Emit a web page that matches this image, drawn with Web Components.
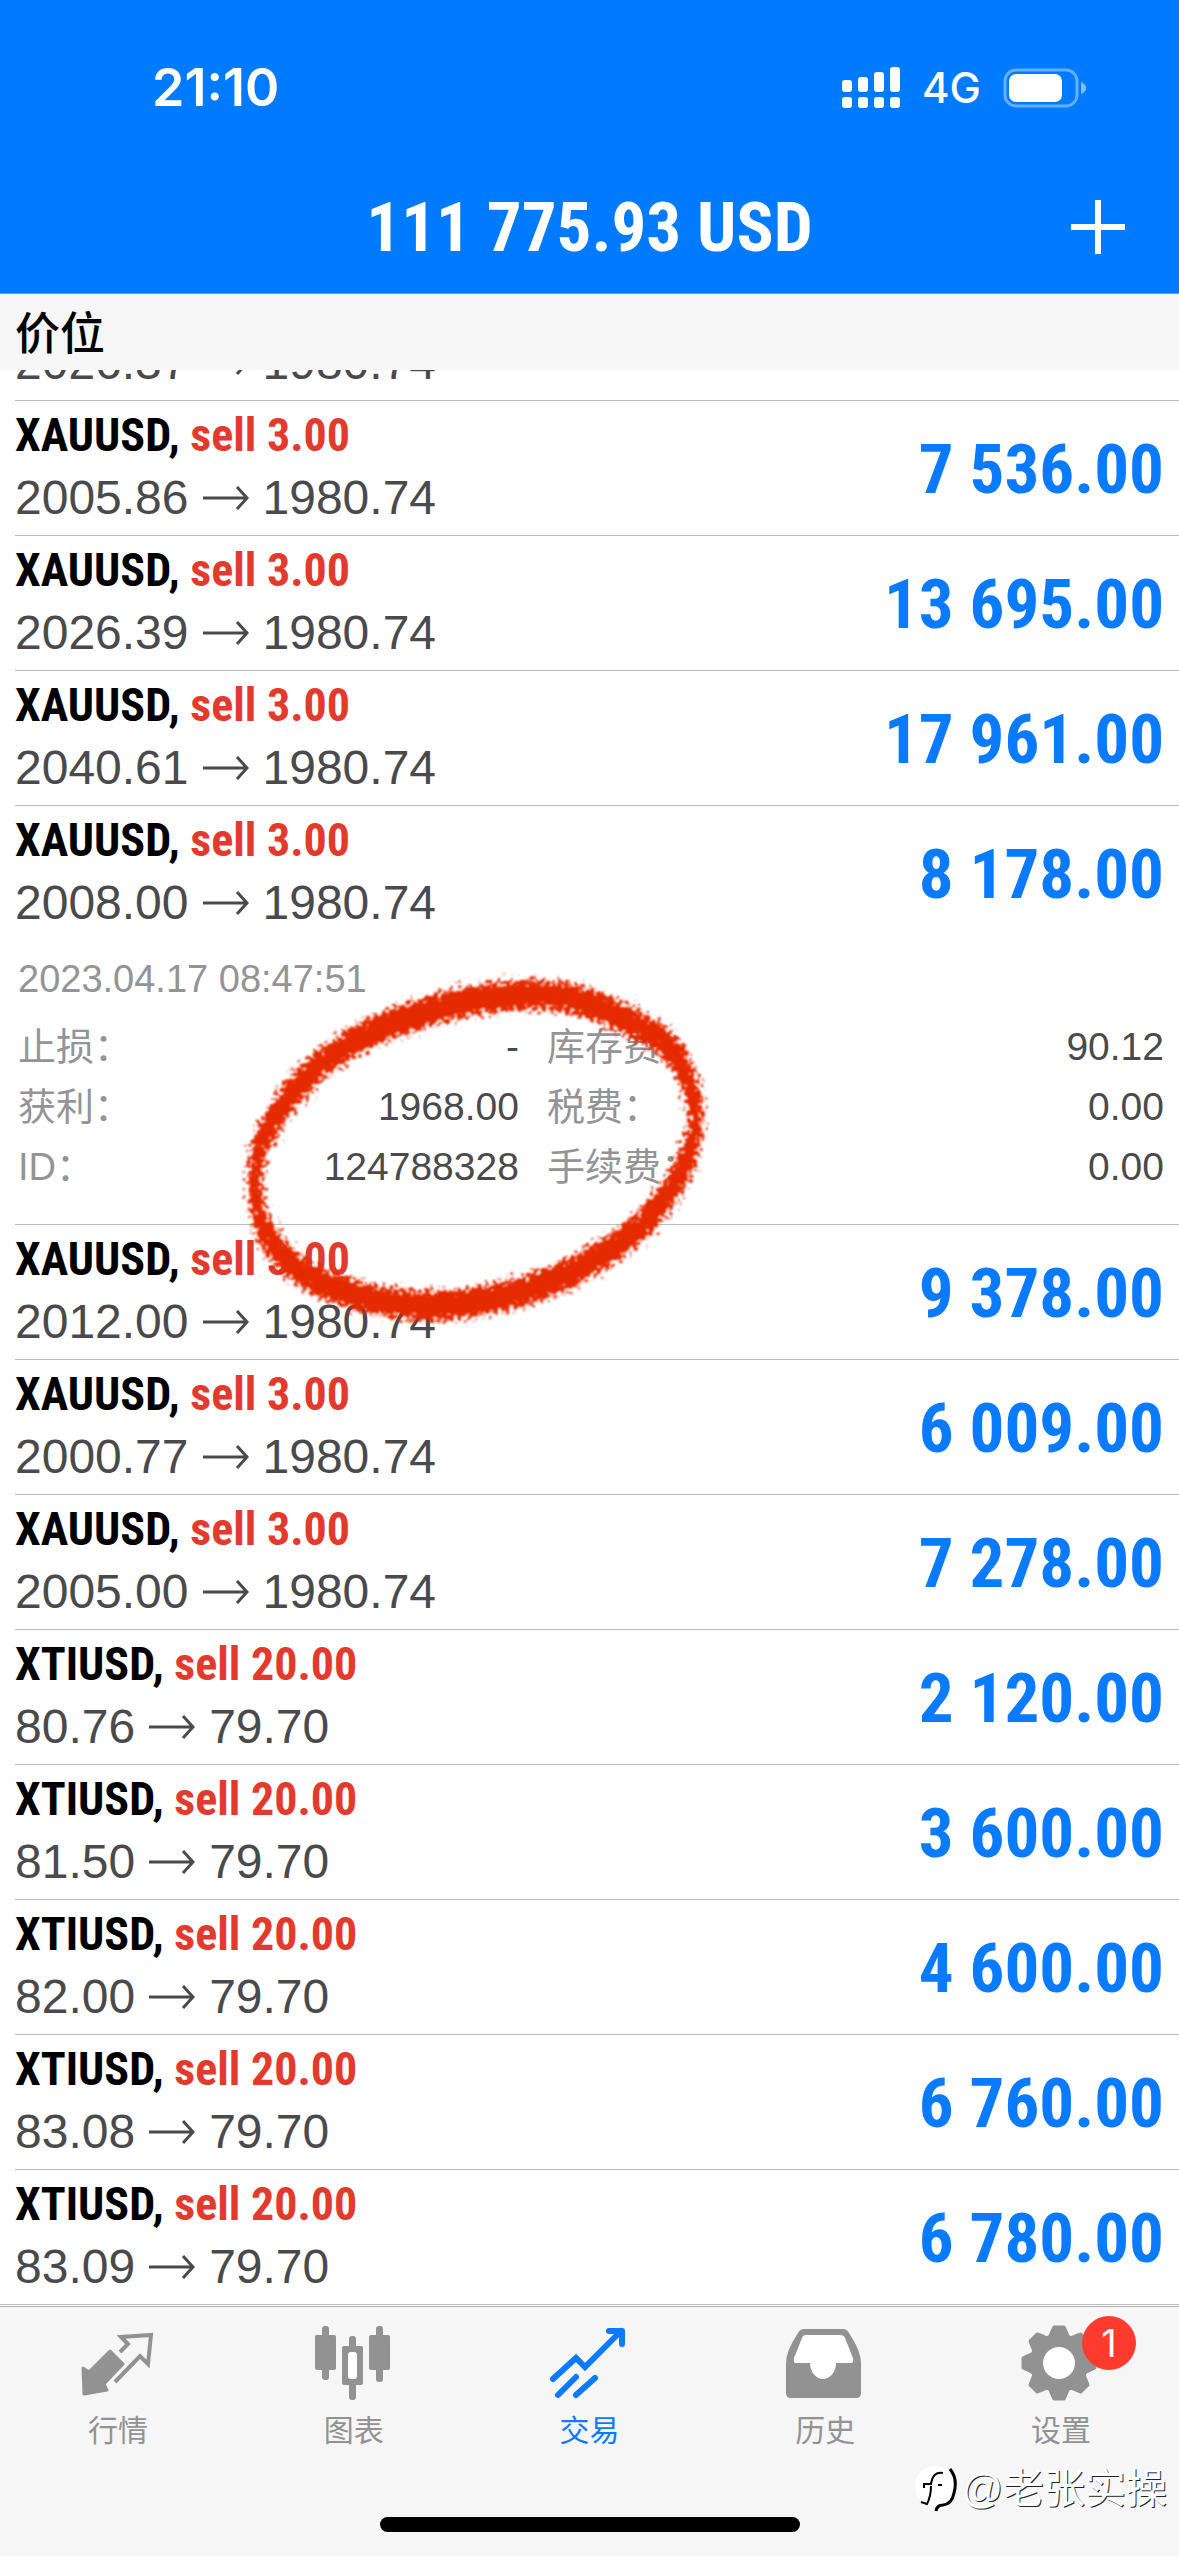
<!DOCTYPE html>
<html lang="zh-CN">
<head>
<meta charset="utf-8">
<meta name="viewport" content="width=device-width, initial-scale=1">
<title>交易</title>
<style>
  body {
    margin: 0;
    background: #fff;
    font-family: "Liberation Sans", "Noto Sans CJK SC", sans-serif;
  }
</style>
</head>
<body>
<trade-app></trade-app>

<script>
const NARROW = '"Roboto Condensed", "Liberation Sans", sans-serif';
const UI = 'Inter, "Noto Sans CJK SC", sans-serif';

function attach(el, html) {
  const template = document.createElement('template');
  template.innerHTML = html;
  el.attachShadow({ mode: 'open' }).appendChild(template.content.cloneNode(true));
}

class StatusBar extends HTMLElement {
  constructor() {
    super();
    attach(this, `
      <style>
        :host {
          display: flex;
          align-items: center;
          justify-content: space-between;
          padding: 56px 92px 20px 152px;
          color: #fff;
          font-family: ${UI};
        }
        time { font-size: 52px; line-height: 64px; font-weight: 600; }
        .right { display: flex; align-items: center; gap: 22px; }
        .network { font-size: 42px; line-height: 64px; font-weight: 500; }
        svg { display: block; }
      </style>
      <time>21:10</time>
      <div class="right">
        <svg width="58" height="42" viewBox="0 0 58 42" fill="#fff">
          <rect x="0" y="13" width="10" height="12" rx="3"/><rect x="0" y="30" width="10" height="11" rx="3"/>
          <rect x="16" y="10" width="10" height="15" rx="3"/><rect x="16" y="30" width="10" height="11" rx="3"/>
          <rect x="32" y="5" width="10" height="20" rx="3"/><rect x="32" y="30" width="10" height="11" rx="3"/>
          <rect x="48" y="0" width="10" height="25" rx="3"/><rect x="48" y="30" width="10" height="11" rx="3"/>
        </svg>
        <span class="network">4G</span>
        <svg width="84" height="40" viewBox="0 0 84 40">
          <rect x="2" y="2" width="72" height="36" rx="11" fill="none" stroke="#fff" stroke-opacity=".4" stroke-width="3"/>
          <rect x="6" y="6" width="53" height="28" rx="7" fill="#fff"/>
          <path d="M78 14q5 2 5 6t-5 6z" fill="#fff" fill-opacity=".5"/>
        </svg>
      </div>
    `);
  }
}
customElements.define('status-bar', StatusBar);

class AccountHeader extends HTMLElement {
  constructor() {
    super();
    attach(this, `
      <style>
        :host {
          display: grid;
          grid-template-columns: 1fr auto 1fr;
          align-items: center;
          padding: 38px 40px 15px;
          color: #fff;
        }
        h1 {
          grid-column: 2;
          margin: 0;
          font: 700 69px/100px ${NARROW};
          white-space: nowrap;
        }
        button {
          justify-self: end;
          padding: 12px;
          border: 0;
          background: none;
          color: inherit;
          cursor: pointer;
        }
        svg { display: block; }
      </style>
      <h1><slot></slot></h1>
      <button aria-label="新订单">
        <svg width="58" height="58" viewBox="0 0 58 58" stroke="currentColor" stroke-width="6"><path d="M29 1v54M2 28h54"/></svg>
      </button>
    `);
  }
}
customElements.define('account-header', AccountHeader);

class SectionTitle extends HTMLElement {
  constructor() {
    super();
    attach(this, `
      <style>
        :host { display: block; padding: 0 15px 2px; background: #f6f6f6; }
        h2 { margin: 0; font: 500 45px/74px "Noto Sans CJK SC", sans-serif; color: #000; }
      </style>
      <h2><slot></slot></h2>
    `);
  }
}
customElements.define('section-title', SectionTitle);

class TradePosition extends HTMLElement {
  constructor() {
    super();
    attach(this, `
      <style>
        :host {
          display: block;
          flex: none;
          margin-left: 15px;
          border-bottom: 1px solid #bcbcbe;
        }
        :host(:last-child) { margin-left: 0; padding-left: 15px; }
        /* scrolled out of view except for its price line */
        :host([partial]) .order, :host([partial]) .profit { display: none; }
        .row {
          display: flex;
          align-items: center;
          justify-content: space-between;
          padding: 3px 15px 5px 0;
        }
        .order { font: 700 46px/62px ${NARROW}; color: #000; }
        .side { color: #e23b2e; }
        .prices {
          display: flex;
          align-items: center;
          gap: 14px;
          font-size: 48px;
          line-height: 64px;
          color: #4a4a4c;
        }
        .arrow { display: block; }
        .profit {
          padding-top: 6px;
          font: 700 69px/100px ${NARROW};
          color: #0a7aff;
          white-space: nowrap;
        }
      </style>
      <div class="row">
        <div>
          <div class="order"><span class="symbol"></span>, <span class="side"></span></div>
          <div class="prices">
            <span class="open"></span>
            <svg class="arrow" width="46" height="26" viewBox="0 0 46 26" fill="none" stroke="currentColor" stroke-width="3"><path d="M0 13h44M34 2l10 11-10 11"/></svg>
            <span class="current"></span>
          </div>
        </div>
        <div class="profit"></div>
      </div>
      <slot></slot>
    `);
  }

  connectedCallback() {
    for (const name of ['symbol', 'side', 'open', 'current', 'profit']) {
      this.shadowRoot.querySelector('.' + name).textContent = this.getAttribute(name);
    }
  }
}
customElements.define('trade-position', TradePosition);

class PositionDetails extends HTMLElement {
  constructor() {
    super();
    attach(this, `
      <style>
        :host {
          display: block;
          padding: 9px 15px 27px 3px;
          font-size: 38px;
          line-height: 60px;
          color: #949496;
        }
        time { display: block; margin-bottom: 8px; }
        dl {
          display: grid;
          grid-template-columns: 500fr 616fr;
          column-gap: 28px;
          margin: 0;
        }
        dl div { display: flex; justify-content: space-between; height: 60px; }
        dd { margin: 0; font-size: 39px; color: #4a4a4c; }
      </style>
      <time>2023.04.17 08:47:51</time>
      <dl>
        <div><dt>止损：</dt><dd>-</dd></div>
        <div><dt>库存费：</dt><dd>90.12</dd></div>
        <div><dt>获利：</dt><dd>1968.00</dd></div>
        <div><dt>税费：</dt><dd>0.00</dd></div>
        <div><dt>ID：</dt><dd>124788328</dd></div>
        <div><dt>手续费：</dt><dd>0.00</dd></div>
      </dl>
    `);
  }
}
customElements.define('position-details', PositionDetails);

// Crayon loop drawn around the take profit and ticket values
class CrayonLoop extends HTMLElement {
  constructor() {
    super();
    const points = [
      [528, 990], [459, 998], [413, 1012], [367, 1030], [331, 1052], [298, 1082], [280, 1107],
      [262, 1137], [255, 1167], [257, 1200], [266, 1228], [280, 1250], [308, 1273], [349, 1290],
      [395, 1300], [441, 1303], [496, 1295], [551, 1280], [601, 1253], [643, 1223], [675, 1183],
      [691, 1150], [699, 1113], [691, 1077], [673, 1043], [643, 1023], [601, 1003], [565, 992]
    ].map(([x, y]) => [x - 231, y - 956]);
    const mid = (a, b) => `${(a[0] + b[0]) / 2} ${(a[1] + b[1]) / 2}`;
    let d = 'M' + mid(points[points.length - 1], points[0]);
    points.forEach((p, i) => {
      d += `Q${p[0]} ${p[1]} ${mid(p, points[(i + 1) % points.length])}`;
    });
    d += 'Z';

    attach(this, `
      <style>
        :host { display: block; pointer-events: none; }
        svg { display: block; }
      </style>
      <svg width="500" height="380" viewBox="0 0 500 380" aria-hidden="true">
        <filter id="rough" x="-5%" y="-5%" width="110%" height="110%">
          <feTurbulence type="fractalNoise" baseFrequency=".25" numOctaves="3" seed="4" result="noise"/>
          <feDisplacementMap in="SourceGraphic" in2="noise" scale="26" xChannelSelector="R" yChannelSelector="G"/>
          <feGaussianBlur stdDeviation=".8"/>
        </filter>
        <g fill="none" stroke="#e62a06" stroke-width="13" filter="url(#rough)">
          <path d="${d}" transform="translate(0 -8)"/>
          <path d="${d}"/>
          <path d="${d}" transform="translate(0 8)"/>
        </g>
      </svg>
    `);
  }
}
customElements.define('crayon-loop', CrayonLoop);

const ICONS = {
  quotes: `
    <path d="M5 46l6 4 21-21 13 13-19 20 3 6-23 4z" fill="currentColor" stroke="currentColor" stroke-width="3" stroke-linejoin="round"/>
    <path d="M42 30l8-8-7-7 30-2-3 29-8-8-25 26" fill="none" stroke="currentColor" stroke-width="4"/>`,
  charts: `
    <g fill="currentColor">
      <rect x="8" y="4" width="7" height="54" rx="3"/><rect x="1" y="13" width="21" height="35" rx="2"/>
      <rect x="35" y="14" width="7" height="64" rx="3"/><rect x="28" y="24" width="21" height="39" rx="2"/>
      <rect x="62" y="4" width="7" height="56" rx="3"/><rect x="55" y="13" width="21" height="35" rx="2"/>
    </g>
    <rect x="34" y="30" width="9" height="27" rx="3" fill="#fff"/>`,
  trade: `
    <g fill="none" stroke="currentColor" stroke-width="6" stroke-linecap="round">
      <path d="M4 57l23-21 9 9 36-36"/><path d="M60 9h13v13" stroke-linejoin="round"/>
      <path d="M9 73l18-18M27 73l19-17"/>
    </g>`,
  history: `
    <path d="M19 7h39q4 0 6 4 12 18 12 30v30q0 5-5 5H6q-5 0-5-5V41Q1 29 13 11q2-4 6-4z" fill="currentColor"/>
    <path d="M21 13h34q4 0 5 3l8 20q1 5-2 5H51a13 16 0 0 1-26 0H11q-3 0-2-5l8-20q1-3 4-3z" fill="#fff"/>`,
  settings: `
    <g fill="currentColor" stroke="currentColor" stroke-width="3" stroke-linejoin="round" transform="translate(38 41)">
      <circle r="28"/>
      ${[0, 45, 90, 135].map(a => `<path d="M-5-36H5q2 4 4 9V27q-2 5-4 9H-5q-2-4-4-9v-54q2-5 4-9z" transform="rotate(${a})"/>`).join('')}
    </g>
    <circle cx="38" cy="41" r="16" fill="#fff"/>`
};

class TabItem extends HTMLElement {
  constructor() {
    super();
    attach(this, `
      <style>
        :host { display: block; flex: 1 1 0; color: #929292; }
        :host([active]) { color: #0a7aff; }
        button {
          display: flex;
          flex-direction: column;
          align-items: center;
          gap: 6px;
          width: 100%;
          padding: 0;
          border: 0;
          background: none;
          color: inherit;
          font: 400 30px/40px "Noto Sans CJK SC", sans-serif;
          cursor: pointer;
        }
        .icon { position: relative; }
        svg { display: block; }
        .badge {
          position: absolute;
          top: -6px;
          right: -35px;
          width: 54px;
          border-radius: 50%;
          background: #ff3b30;
          color: #fff;
          font: 400 38px/54px ${UI};
          text-align: center;
        }
        .badge:empty { display: none; }
      </style>
      <button>
        <span class="icon">
          <svg width="80" height="80" viewBox="0 0 80 80"></svg>
          <span class="badge"></span>
        </span>
        <span><slot></slot></span>
      </button>
    `);
  }

  connectedCallback() {
    this.shadowRoot.querySelector('svg').innerHTML = ICONS[this.getAttribute('icon')];
    this.shadowRoot.querySelector('.badge').textContent = this.getAttribute('badge') || '';
    if (this.hasAttribute('active')) {
      this.shadowRoot.querySelector('button').setAttribute('aria-current', 'page');
    }
  }
}
customElements.define('tab-item', TabItem);

class TabBar extends HTMLElement {
  constructor() {
    super();
    attach(this, `
      <style>
        :host {
          display: block;
          margin-top: 1px;
          border-top: 1px solid #b0b0b2;
          background: #f6f6f6;
          padding: 15px 0 24px;
        }
        nav { display: flex; }
        .home { width: 420px; height: 15px; margin: 69px auto 0; border-radius: 8px; background: #000; }
      </style>
      <nav><slot></slot></nav>
      <div class="home"></div>
    `);
  }
}
customElements.define('tab-bar', TabBar);

class AuthorMark extends HTMLElement {
  constructor() {
    super();
    attach(this, `
      <style>
        :host {
          display: flex;
          align-items: center;
          gap: 4px;
          color: #fff;
          font: 400 41px/60px "Liberation Sans", "Noto Sans CJK SC", sans-serif;
          text-shadow: 1px 1px 0 #222;
        }
        svg { display: block; }
      </style>
      <svg width="42" height="50" viewBox="0 0 42 50" fill="none">
        <circle cx="20" cy="22" r="20" fill="#fff"/>
        <path d="M35 5q8 10 4 24-2 11-11 12-6 0-7 6" stroke="#000" stroke-width="3"/>
        <path d="M28 9q-10-2-12 11H9v4M16 22q0 10-4 18l-6-2M23 21h4" stroke="#000" stroke-width="2"/>
      </svg>
      <span>@老张实操</span>
    `);
  }
}
customElements.define('author-mark', AuthorMark);

const POSITIONS = [
  ['XAUUSD', 'sell 3.00', '2026.37', '1980.74', '', 'partial'],
  ['XAUUSD', 'sell 3.00', '2005.86', '1980.74', '7 536.00'],
  ['XAUUSD', 'sell 3.00', '2026.39', '1980.74', '13 695.00'],
  ['XAUUSD', 'sell 3.00', '2040.61', '1980.74', '17 961.00'],
  ['XAUUSD', 'sell 3.00', '2008.00', '1980.74', '8 178.00', 'expanded'],
  ['XAUUSD', 'sell 3.00', '2012.00', '1980.74', '9 378.00'],
  ['XAUUSD', 'sell 3.00', '2000.77', '1980.74', '6 009.00'],
  ['XAUUSD', 'sell 3.00', '2005.00', '1980.74', '7 278.00'],
  ['XTIUSD', 'sell 20.00', '80.76', '79.70', '2 120.00'],
  ['XTIUSD', 'sell 20.00', '81.50', '79.70', '3 600.00'],
  ['XTIUSD', 'sell 20.00', '82.00', '79.70', '4 600.00'],
  ['XTIUSD', 'sell 20.00', '83.08', '79.70', '6 760.00'],
  ['XTIUSD', 'sell 20.00', '83.09', '79.70', '6 780.00']
];

class TradeApp extends HTMLElement {
  constructor() {
    super();
    const rows = POSITIONS.map(([symbol, side, open, current, profit, state = '']) => `
      <trade-position symbol="${symbol}" side="${side}" open="${open}" current="${current}" profit="${profit}" ${state}>
        ${state === 'expanded' ? '<position-details></position-details>' : ''}
      </trade-position>`).join('');

    attach(this, `
      <style>
        :host {
          display: flex;
          flex-direction: column;
          height: 100vh;
          position: relative;
          overflow: hidden;
        }
        header { background: #007aff; border-bottom: 1px solid #5a9bd8; }
        /* scrolled to the end: the oldest rows slide under the section title */
        main {
          flex: 1;
          min-height: 0;
          display: flex;
          flex-direction: column;
          justify-content: flex-end;
          overflow: hidden;
        }
        crayon-loop { position: absolute; left: 230px; top: 960px; }
        author-mark { position: absolute; right: 12px; bottom: 37px; }
      </style>
      <header>
        <status-bar></status-bar>
        <account-header>111 775.93 USD</account-header>
      </header>
      <section-title>价位</section-title>
      <main>${rows}</main>
      <tab-bar>
        <tab-item icon="quotes">行情</tab-item>
        <tab-item icon="charts">图表</tab-item>
        <tab-item icon="trade" active>交易</tab-item>
        <tab-item icon="history">历史</tab-item>
        <tab-item icon="settings" badge="1">设置</tab-item>
      </tab-bar>
      <crayon-loop></crayon-loop>
      <author-mark></author-mark>
    `);
  }
}
customElements.define('trade-app', TradeApp);
</script>
</body>
</html>
